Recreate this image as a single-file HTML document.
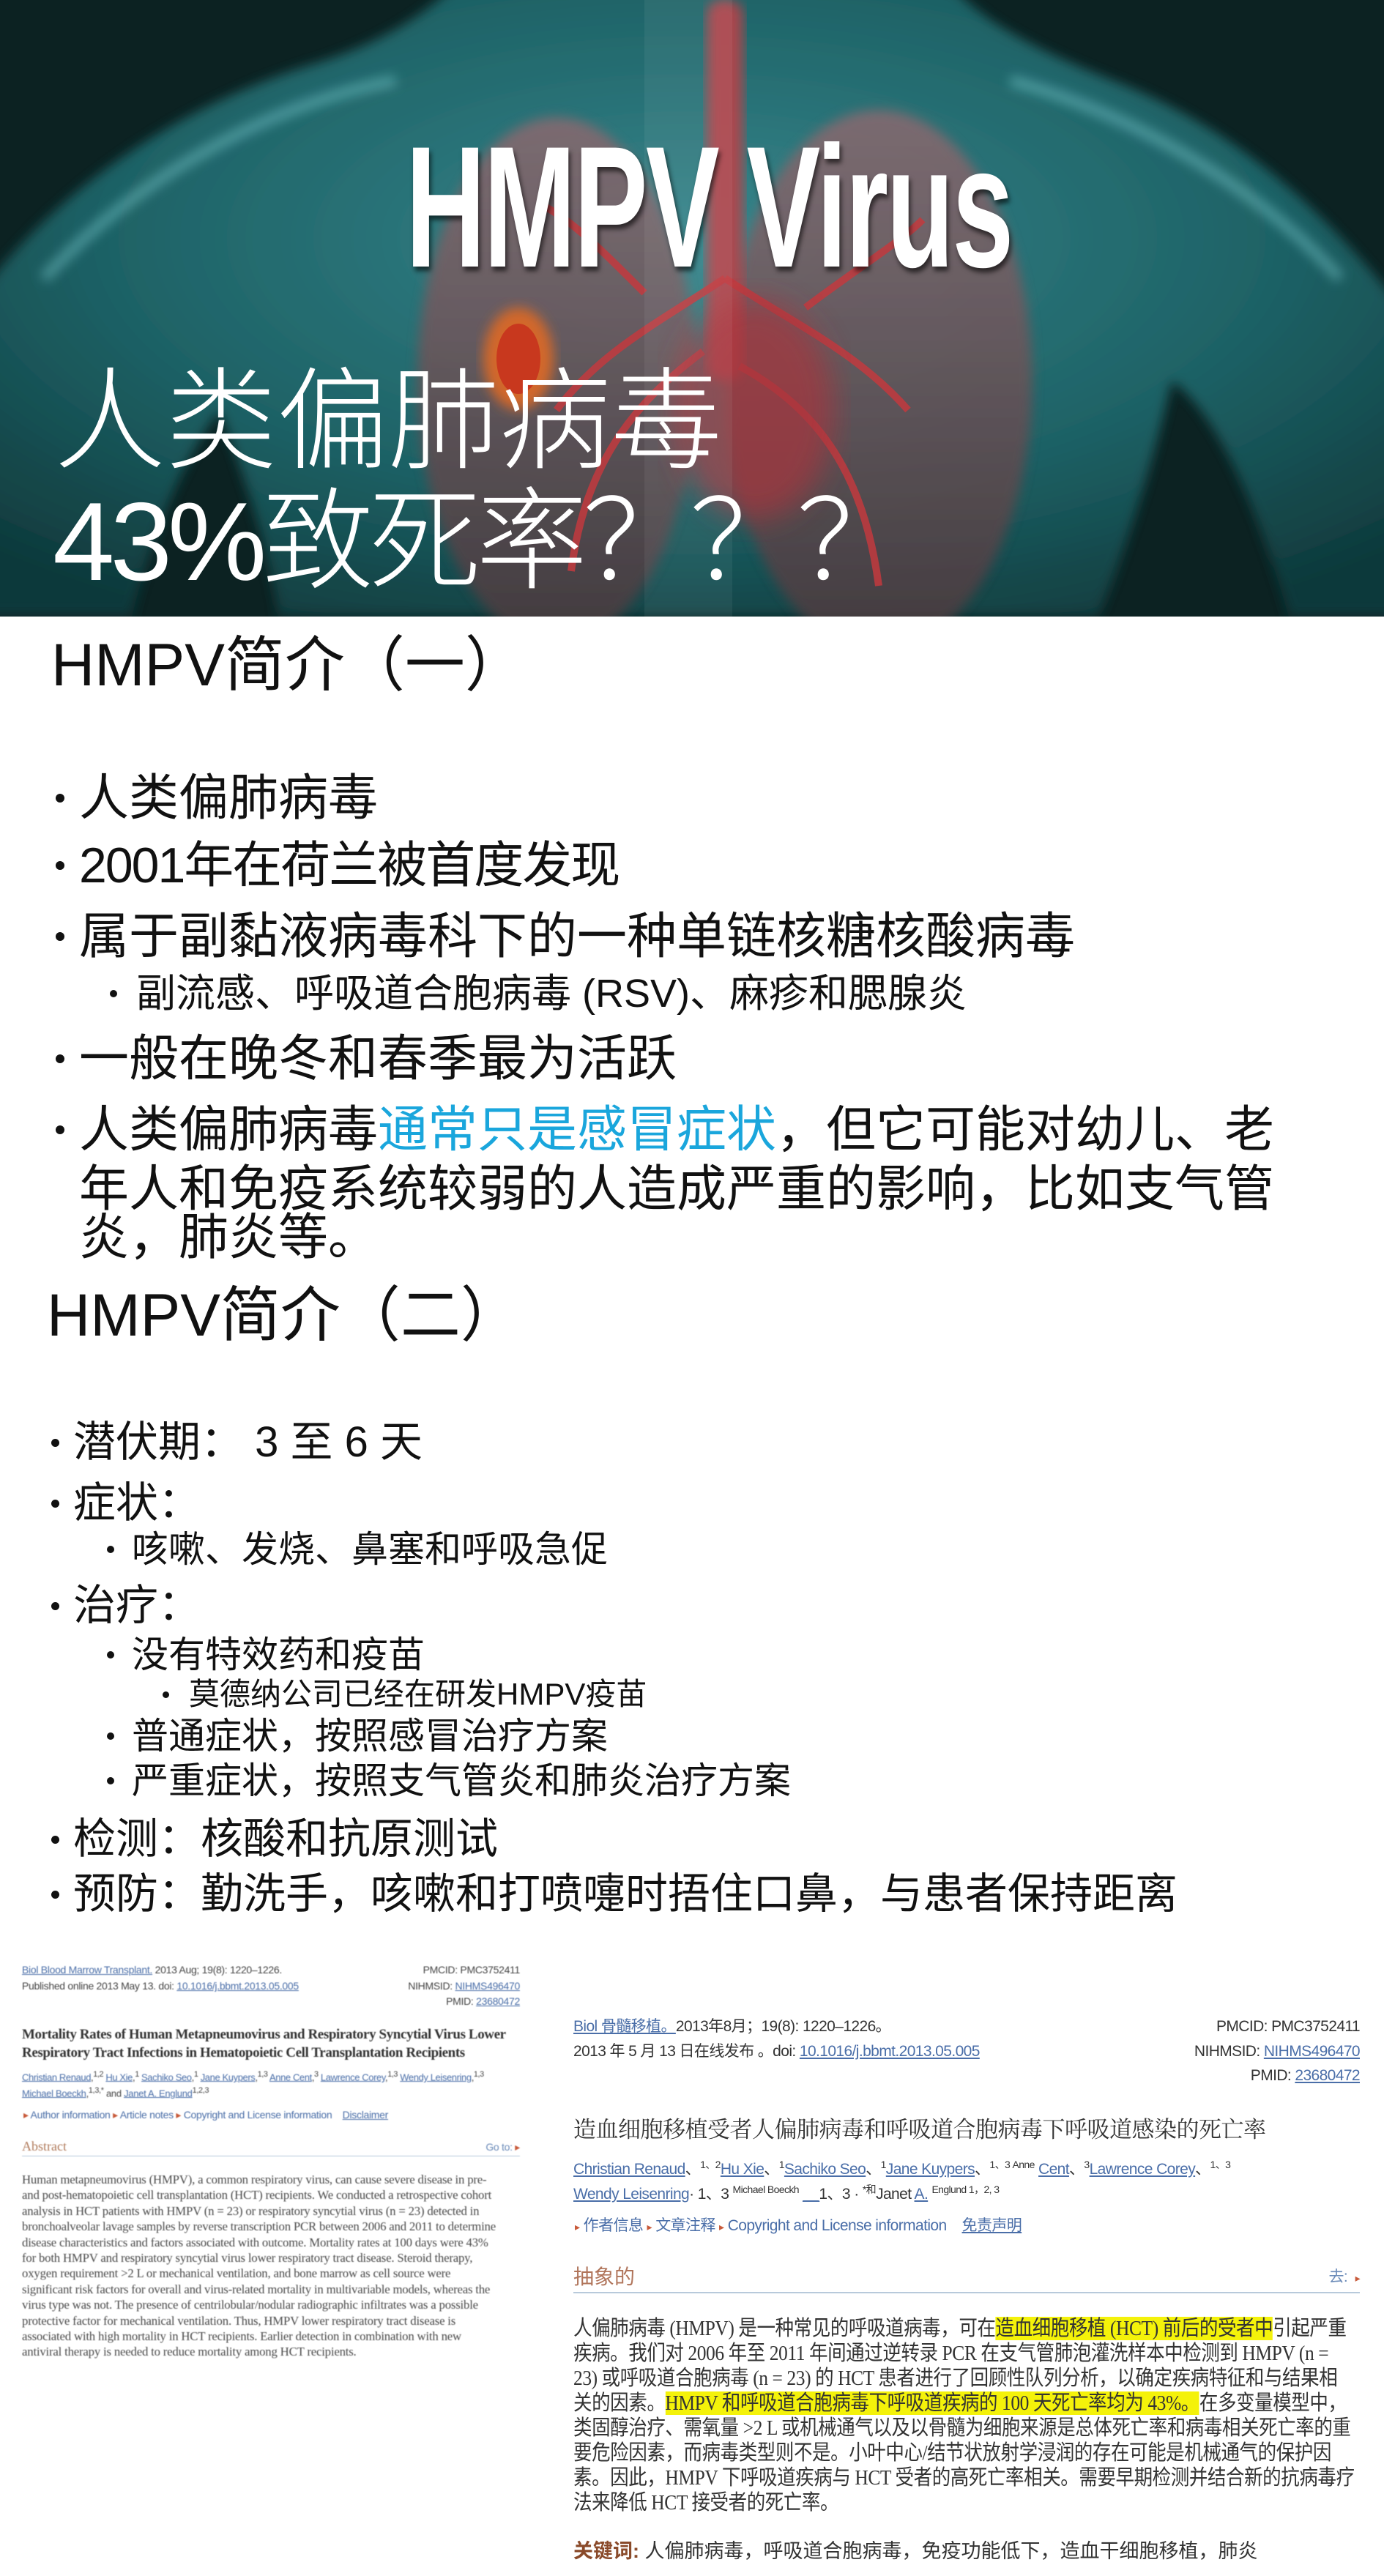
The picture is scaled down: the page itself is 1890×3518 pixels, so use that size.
<!DOCTYPE html>
<html><head><meta charset="utf-8">
<style>
*{margin:0;padding:0;box-sizing:border-box}
html,body{width:1890px;height:3518px;background:#fff;overflow:hidden}
body{position:relative;font-family:"Liberation Sans","Noto Sans CJK SC",sans-serif;color:#111}
.a{position:absolute;white-space:nowrap}
.dot{position:absolute;border-radius:50%;background:#111}
.s1{font-size:68px;line-height:68px;height:68px}
.s1s{font-size:54px;line-height:54px}
.s2{font-size:58px;line-height:58px}
.s2s{font-size:50px;line-height:50px}
.s2ss{font-size:42px;line-height:42px}
.h{font-size:82px;line-height:82px}
.lk{color:#4a6ea8;text-decoration:underline}
.lp{font-size:14px;line-height:16px;color:#444;letter-spacing:-0.3px}
.rp{font-size:21px;line-height:24px;color:#333;letter-spacing:-0.6px}
.rb{font-family:"Liberation Serif","Noto Sans CJK SC",serif;font-size:29px;line-height:34px;color:#333;letter-spacing:-0.5px;transform:scaleX(0.88);transform-origin:0 0}
.hl{background:#f4f20a}
</style></head><body>

<!-- Top image -->
<div class="a" style="left:0;top:0;width:1890px;height:842px;overflow:hidden;background:#0d2424">
<svg width="1890" height="842" viewBox="0 0 1890 842" style="position:absolute;left:0;top:0">
<defs>
<filter id="b8"><feGaussianBlur stdDeviation="8"/></filter>
<filter id="b20"><feGaussianBlur stdDeviation="20"/></filter>
<radialGradient id="tg" cx="0.5" cy="0.4" r="0.7">
<stop offset="0" stop-color="#3a8c92"/><stop offset="0.6" stop-color="#1e6468"/><stop offset="1" stop-color="#0f3a3c"/></radialGradient>
<linearGradient id="lg" x1="0" y1="0" x2="0" y2="1"><stop offset="0" stop-color="#8a6a70"/><stop offset="1" stop-color="#4a3a3e"/></linearGradient>
</defs>
<rect width="1890" height="842" fill="#0c2222"/>
<path d="M-40 842 L-40 420 C40 300 200 160 420 90 C520 60 580 20 620 -20 L1300 -20 C1340 30 1420 70 1520 110 C1700 180 1820 300 1930 440 L1930 842 L1760 842 C1720 700 1660 560 1600 520 C1560 700 1500 842 1500 842 L380 842 C370 760 330 640 300 560 C240 640 200 760 180 842 Z" fill="url(#tg)" filter="url(#b8)" opacity="0.95"/>
<path d="M60 380 C200 230 380 140 540 110" stroke="#7fd0d4" stroke-width="14" fill="none" opacity="0.5" filter="url(#b8)"/>
<path d="M1380 110 C1560 160 1720 260 1830 380" stroke="#7fd0d4" stroke-width="14" fill="none" opacity="0.5" filter="url(#b8)"/>
<ellipse cx="760" cy="520" rx="190" ry="360" fill="url(#lg)" opacity="0.85" filter="url(#b8)"/>
<ellipse cx="1200" cy="520" rx="210" ry="370" fill="url(#lg)" opacity="0.85" filter="url(#b8)"/>
<rect x="965" y="0" width="50" height="520" rx="20" fill="#b8434a" opacity="0.9" filter="url(#b8)"/>
<path d="M990 380 C900 440 820 480 760 560 M990 380 C1080 440 1170 480 1240 560 M1010 500 C1120 560 1180 650 1200 800 M960 480 C880 540 800 620 780 780 M1100 420 C1180 360 1230 330 1260 300 M880 400 C820 340 780 300 740 280" stroke="#c23a3e" stroke-width="10" fill="none" opacity="0.85"/>
<ellipse cx="1030" cy="560" rx="110" ry="150" fill="#a8363c" opacity="0.7" filter="url(#b20)"/>
<ellipse cx="708" cy="490" rx="48" ry="70" fill="#d2682a" filter="url(#b8)"/>
<ellipse cx="708" cy="490" rx="30" ry="48" fill="#c8381e"/>
<rect x="880" y="0" width="120" height="842" fill="#ffffff" opacity="0.06"/>
</svg>
<div class="a" style="left:554px;top:165px;font-family:'Liberation Sans',sans-serif;font-weight:bold;font-size:236px;line-height:236px;color:#fff;transform:scaleX(0.64);transform-origin:0 0;text-shadow:4px 6px 8px rgba(0,0,0,0.6);letter-spacing:-4px">HMPV Virus</div>
<div class="a" style="left:74px;top:500px;font-size:152px;line-height:152px;color:#fff;font-weight:300">人类偏肺病毒</div>
<div class="a" style="left:72px;top:664px;font-size:152px;line-height:152px;color:#fff;font-weight:300;letter-spacing:-6px">43%致死率？？？</div>
</div>

<!-- Section 1 -->
<div class="a h" style="left:70px;top:868px">HMPV简介（一）</div>
<div class="dot" style="left:76px;top:1084px;width:12px;height:12px"></div>
<div class="a s1" style="left:108px;top:1056px">人类偏肺病毒</div>
<div class="dot" style="left:76px;top:1176px;width:12px;height:12px"></div>
<div class="a s1" style="left:108px;top:1148px;letter-spacing:-2px">2001年在荷兰被首度发现</div>
<div class="dot" style="left:76px;top:1273px;width:12px;height:12px"></div>
<div class="a s1" style="left:108px;top:1245px">属于副黏液病毒科下的一种单链核糖核酸病毒</div>
<div class="dot" style="left:150px;top:1352px;width:10px;height:10px"></div>
<div class="a s1s" style="left:186px;top:1330px">副流感、呼吸道合胞病毒 (RSV)、麻疹和腮腺炎</div>
<div class="dot" style="left:76px;top:1440px;width:12px;height:12px"></div>
<div class="a s1" style="left:108px;top:1412px">一般在晚冬和春季最为活跃</div>
<div class="dot" style="left:76px;top:1537px;width:12px;height:12px"></div>
<div class="a s1" style="left:108px;top:1509px">人类偏肺病毒<span style="color:#1aa6dc">通常只是感冒症状</span>，但它可能对幼儿、老</div>
<div class="a s1" style="left:108px;top:1590px">年人和免疫系统较弱的人造成严重的影响，比如支气管</div>
<div class="a s1" style="left:108px;top:1656px">炎，肺炎等。</div>

<!-- Section 2 -->
<div class="a h" style="left:64px;top:1756px">HMPV简介（二）</div>
<div class="dot" style="left:70px;top:1965px;width:11px;height:11px"></div>
<div class="a s2" style="left:100px;top:1941px">潜伏期：&nbsp;3 至 6 天</div>
<div class="dot" style="left:70px;top:2048px;width:11px;height:11px"></div>
<div class="a s2" style="left:100px;top:2024px">症状：</div>
<div class="dot" style="left:146px;top:2111px;width:10px;height:10px"></div>
<div class="a s2s" style="left:180px;top:2091px">咳嗽、发烧、鼻塞和呼吸急促</div>
<div class="dot" style="left:70px;top:2188px;width:11px;height:11px"></div>
<div class="a s2" style="left:100px;top:2164px">治疗：</div>
<div class="dot" style="left:146px;top:2255px;width:10px;height:10px"></div>
<div class="a s2s" style="left:180px;top:2235px">没有特效药和疫苗</div>
<div class="dot" style="left:222px;top:2310px;width:9px;height:9px"></div>
<div class="a s2ss" style="left:258px;top:2293px">莫德纳公司已经在研发HMPV疫苗</div>
<div class="dot" style="left:146px;top:2366px;width:10px;height:10px"></div>
<div class="a s2s" style="left:180px;top:2346px">普通症状，按照感冒治疗方案</div>
<div class="dot" style="left:146px;top:2427px;width:10px;height:10px"></div>
<div class="a s2s" style="left:180px;top:2407px">严重症状，按照支气管炎和肺炎治疗方案</div>
<div class="dot" style="left:70px;top:2507px;width:11px;height:11px"></div>
<div class="a s2" style="left:100px;top:2483px">检测：核酸和抗原测试</div>
<div class="dot" style="left:70px;top:2582px;width:11px;height:11px"></div>
<div class="a s2" style="left:100px;top:2558px">预防：勤洗手，咳嗽和打喷嚏时捂住口鼻，与患者保持距离</div>

<!-- Left panel (English) -->
<div style="position:absolute;left:0;top:2650px;width:760px;height:620px;filter:blur(0.4px)">
<div class="a lp" style="left:30px;top:32px"><span class="lk">Biol Blood Marrow Transplant.</span> 2013 Aug; 19(8): 1220–1226.</div>
<div class="a lp" style="left:30px;top:54px">Published online 2013 May 13. doi: <span class="lk">10.1016/j.bbmt.2013.05.005</span></div>
<div class="a lp" style="right:50px;top:32px">PMCID: PMC3752411</div>
<div class="a lp" style="right:50px;top:54px">NIHMSID: <span class="lk">NIHMS496470</span></div>
<div class="a lp" style="right:50px;top:75px">PMID: <span class="lk">23680472</span></div>
<div class="a" style="left:30px;top:116px;font-family:'Liberation Serif',serif;font-weight:bold;font-size:19px;line-height:25px;color:#333;letter-spacing:-0.4px">Mortality Rates of Human Metapneumovirus and Respiratory Syncytial Virus Lower<br>Respiratory Tract Infections in Hematopoietic Cell Transplantation Recipients</div>
<div class="a lp" style="left:30px;top:175px;font-size:13px;letter-spacing:-0.4px"><span class="lk">Christian Renaud</span>,<sup>1,2</sup> <span class="lk">Hu Xie</span>,<sup>1</sup> <span class="lk">Sachiko Seo</span>,<sup>1</sup> <span class="lk">Jane Kuypers</span>,<sup>1,3</sup> <span class="lk">Anne Cent</span>,<sup>3</sup> <span class="lk">Lawrence Corey</span>,<sup>1,3</sup> <span class="lk">Wendy Leisenring</span>,<sup>1,3</sup></div>
<div class="a lp" style="left:30px;top:197px;font-size:13px"><span class="lk">Michael Boeckh</span>,<sup>1,3,*</sup> and <span class="lk">Janet A. Englund</span><sup>1,2,3</sup></div>
<div class="a lp" style="left:32px;top:230px;color:#4a6ea8"><span style="color:#c85a3a">▸</span> Author information <span style="color:#c85a3a">▸</span> Article notes <span style="color:#c85a3a">▸</span> Copyright and License information &nbsp;&nbsp; <span class="lk">Disclaimer</span></div>
<div class="a" style="left:30px;top:271px;font-family:'Liberation Serif',serif;font-size:18px;color:#b07a5a">Abstract</div>
<div class="a lp" style="right:50px;top:274px;color:#6a8ab8">Go to: <span style="color:#c85a3a">▸</span></div>
<div class="a" style="left:30px;top:294px;width:680px;height:1px;background:#b8cadb"></div>
<div class="a" style="left:30px;top:316px;font-family:'Liberation Serif',serif;font-size:16.8px;line-height:21.4px;color:#4a4a4a;letter-spacing:-0.2px">Human metapneumovirus (HMPV), a common respiratory virus, can cause severe disease in pre-<br>and post-hematopoietic cell transplantation (HCT) recipients. We conducted a retrospective cohort<br>analysis in HCT patients with HMPV (n = 23) or respiratory syncytial virus (n = 23) detected in<br>bronchoalveolar lavage samples by reverse transcription PCR between 2006 and 2011 to determine<br>disease characteristics and factors associated with outcome. Mortality rates at 100 days were 43%<br>for both HMPV and respiratory syncytial virus lower respiratory tract disease. Steroid therapy,<br>oxygen requirement &gt;2 L or mechanical ventilation, and bone marrow as cell source were<br>significant risk factors for overall and virus-related mortality in multivariable models, whereas the<br>virus type was not. The presence of centrilobular/nodular radiographic infiltrates was a possible<br>protective factor for mechanical ventilation. Thus, HMPV lower respiratory tract disease is<br>associated with high mortality in HCT recipients. Earlier detection in combination with new<br>antiviral therapy is needed to reduce mortality among HCT recipients.</div>
</div>

<!-- Right panel (Chinese) -->
<div style="position:absolute;left:0;top:0;width:1890px;height:3518px;filter:blur(0.3px)">
<div class="a rp" style="left:783px;top:2756px"><span class="lk">Biol 骨髓移植。</span>2013年8月；19(8): 1220–1226。</div>
<div class="a rp" style="left:783px;top:2790px">2013 年 5 月 13 日在线发布 。doi: <span class="lk">10.1016/j.bbmt.2013.05.005</span></div>
<div class="a rp" style="right:33px;top:2756px">PMCID:  PMC3752411</div>
<div class="a rp" style="right:33px;top:2790px">NIHMSID:  <span class="lk">NIHMS496470</span></div>
<div class="a rp" style="right:33px;top:2823px">PMID: <span class="lk">23680472</span></div>
<div class="a" style="left:783px;top:2886px;font-family:'Noto Serif CJK SC',serif;font-size:31px;line-height:40px;color:#333;letter-spacing:-0.5px">造血细胞移植受者人偏肺病毒和呼吸道合胞病毒下呼吸道感染的死亡率</div>
<div class="a rp" style="left:783px;top:2944px"><span class="lk">Christian Renaud</span>、<sup style="font-size:14px">1、2</sup><span class="lk">Hu Xie</span>、<sup style="font-size:14px">1</sup><span class="lk">Sachiko Seo</span>、<sup style="font-size:14px">1</sup><span class="lk">Jane Kuypers</span>、<sup style="font-size:14px">1、3 Anne</sup> <span class="lk">Cent</span>、<sup style="font-size:14px">3</sup><span class="lk">Lawrence Corey</span>、<sup style="font-size:14px">1、3</sup></div>
<div class="a rp" style="left:783px;top:2978px"><span class="lk">Wendy Leisenring</span>·  1、3 <sup style="font-size:14px">Michael Boeckh</sup> <span class="lk">__</span>1、3 · <sup style="font-size:14px">*和</sup>Janet <span class="lk">A.</span> <sup style="font-size:14px">Englund 1，2, 3</sup></div>
<div class="a rp" style="left:785px;top:3028px;color:#4a6ea8"><span style="color:#c85a3a;font-size:14px">▸</span> 作者信息 <span style="color:#c85a3a;font-size:14px">▸</span> 文章注释 <span style="color:#c85a3a;font-size:14px">▸</span> Copyright and License information &nbsp;&nbsp; <span class="lk">免责声明</span></div>
<div class="a" style="left:783px;top:3094px;font-size:28px;line-height:32px;color:#b0745a">抽象的</div>
<div class="a rp" style="right:33px;top:3098px;color:#6a8ab8">去: &nbsp;<span style="color:#c85a3a;font-size:14px">▸</span></div>
<div class="a" style="left:783px;top:3130px;width:1074px;height:2px;background:#b8cadb"></div>
<div class="a rb" style="left:783px;top:3163px">人偏肺病毒 (HMPV) 是一种常见的呼吸道病毒，可在<span class="hl">造血细胞移植 (HCT) 前后的受者中</span>引起严重</div>
<div class="a rb" style="left:783px;top:3197px">疾病。我们对 2006 年至 2011 年间通过逆转录 PCR 在支气管肺泡灌洗样本中检测到 HMPV (n =</div>
<div class="a rb" style="left:783px;top:3231px">23) 或呼吸道合胞病毒 (n = 23) 的 HCT 患者进行了回顾性队列分析，以确定疾病特征和与结果相</div>
<div class="a rb" style="left:783px;top:3265px">关的因素。<span class="hl">HMPV 和呼吸道合胞病毒下呼吸道疾病的 100 天死亡率均为 43%。</span>在多变量模型中，</div>
<div class="a rb" style="left:783px;top:3299px">类固醇治疗、需氧量 &gt;2 L 或机械通气以及以骨髓为细胞来源是总体死亡率和病毒相关死亡率的重</div>
<div class="a rb" style="left:783px;top:3333px">要危险因素，而病毒类型则不是。小叶中心/结节状放射学浸润的存在可能是机械通气的保护因</div>
<div class="a rb" style="left:783px;top:3367px">素。因此，HMPV 下呼吸道疾病与 HCT 受者的高死亡率相关。需要早期检测并结合新的抗病毒疗</div>
<div class="a rb" style="left:783px;top:3401px">法来降低 HCT 接受者的死亡率。</div>
<div class="a" style="left:783px;top:3467px;font-size:27px;line-height:34px;color:#333"><b style="color:#8a4a2a">关键词:</b> 人偏肺病毒，呼吸道合胞病毒，免疫功能低下，造血干细胞移植，肺炎</div>
</div>
</body></html>
